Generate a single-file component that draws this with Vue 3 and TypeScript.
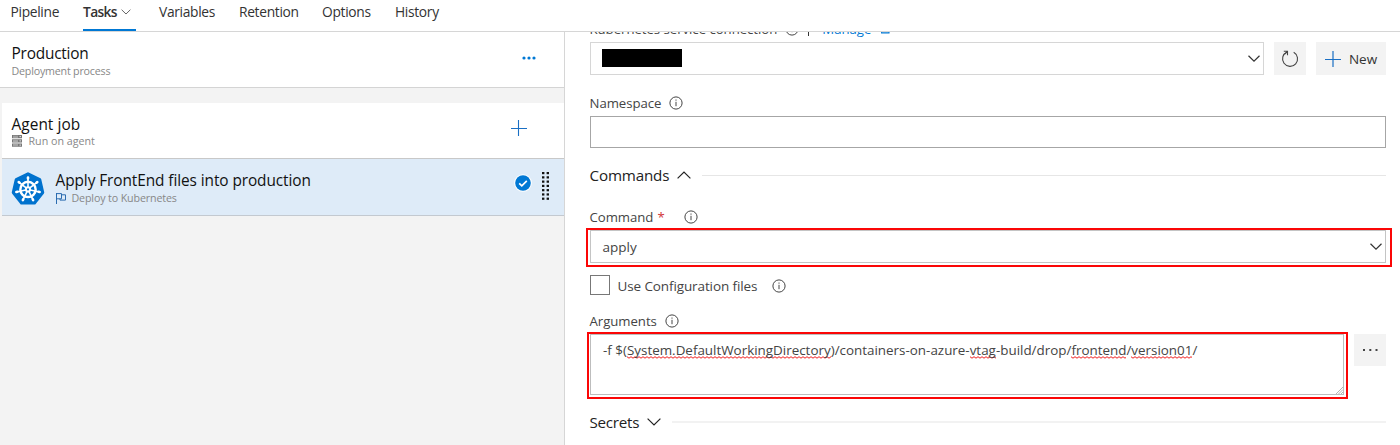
<script setup lang="ts">
import { h, type FunctionalComponent } from 'vue'

interface Tab {
  label: string
  active?: boolean
  id: string
}

const tabs: Tab[] = [
  { label: 'Pipeline', id: 'pipeline' },
  { label: 'Tasks', id: 'tasks', active: true },
  { label: 'Variables', id: 'variables' },
  { label: 'Retention', id: 'retention' },
  { label: 'Options', id: 'options' },
  { label: 'History', id: 'history' },
]

const InfoIcon: FunctionalComponent = () =>
  h('svg', { width: 14, height: 14, viewBox: '0 0 14 14', fill: 'none' }, [
    h('circle', { cx: 7, cy: 7, r: 6.1, stroke: '#444', 'stroke-width': 1 }),
    h('path', { d: 'M7 5.8v4.4M7 3.5v1.2', stroke: '#444', 'stroke-width': 1 }),
  ])

const spokes = [0, 1, 2, 3, 4, 5, 6].map((i) => (i * 360) / 7)
const gripRows = [0, 1, 2, 3, 4, 5, 6]
const argParts = [
  { text: '-f $(', bad: false },
  { text: 'System.DefaultWorkingDirectory', bad: true },
  { text: ')/containers-on-azure-', bad: false },
  { text: 'vtag', bad: true },
  { text: '-build/drop/', bad: false },
  { text: 'frontend', bad: true },
  { text: '/', bad: false },
  { text: 'version01', bad: true },
  { text: '/', bad: false },
]
</script>

<template>
  <div class="page">
    <nav class="tabs">
      <div v-for="tab in tabs" :key="tab.id" class="tab" :class="[tab.id, { active: tab.active }]">
        <span>{{ tab.label }}</span>
        <svg v-if="tab.active" width="10" height="6" viewBox="0 0 10 6" fill="none">
          <path d="M.6.7 5 5 9.4.7" stroke="#555" stroke-width=".9" />
        </svg>
      </div>
    </nav>

    <div class="body">
      <aside class="side">
        <div class="stage">
          <div class="lines">
            <div class="title">Production</div>
            <div class="sub t-dep">Deployment process</div>
          </div>
          <svg class="more" width="14" height="4" viewBox="0 0 14 4" fill="#0078d4">
            <circle cx="2" cy="2" r="1.6" /><circle cx="7" cy="2" r="1.6" /><circle cx="12" cy="2" r="1.6" />
          </svg>
        </div>

        <div class="job">
          <div class="lines">
            <div class="title t-agent">Agent job</div>
            <div class="sub t-run">
              <svg width="10" height="12" viewBox="0 0 10 12">
                <path d="M0 0h10v3.3H0zM0 4.2h10v3.3H0zM0 8.4h10v3.3H0z" fill="#777" />
                <path d="M1 1.2h5M1 2.3h5M1 5.4h5M1 6.5h5M1 9.6h5M1 10.7h5" stroke="#ddd" stroke-width=".5" />
                <path d="M7.6 1.6h1.2M7.6 5.9h1.2M7.6 10.1h1.2" stroke="#fff" stroke-width="1" />
              </svg>
              <span>Run on agent</span>
            </div>
          </div>
          <svg class="add" width="16" height="16" viewBox="0 0 16 16">
            <path d="M0 8.5h16M7.5 0v16" stroke="#1a6fc4" stroke-width="1.1" />
          </svg>
        </div>

        <div class="task">
          <svg class="kube" width="34" height="34" viewBox="0 0 32 32" fill="none">
            <path
              d="M16 1.6 27.2 7 30 19.4 22.2 29.4H9.8L2 19.4 4.8 7z"
              fill="#0072ce"
              stroke="#0072ce"
              stroke-width="2.6"
              stroke-linejoin="round"
            />
            <circle cx="16" cy="16.4" r="7.2" stroke="#fff" stroke-width="2.3" />
            <g v-for="a in spokes" :key="a" :transform="`rotate(${a} 16 16.4)`" stroke="#fff" stroke-linecap="round">
              <path d="M16 14.2V5.2" stroke-width="1.5" />
              <path d="M16 6.2V5.2" stroke-width="2.4" />
            </g>
            <circle cx="16" cy="16.4" r="2.9" fill="#fff" />
            <circle cx="16" cy="16.4" r="1" fill="#0072ce" />
          </svg>
          <div class="lines">
            <div class="title t-apply">Apply FrontEnd files into production</div>
            <div class="sub t-kube">
              <svg width="10" height="11" viewBox="0 0 10 11" fill="none">
                <path d="M.5 0v11M.5.6h5v5.2h-5M5.5 1.8h4v5.3H4V5.8" stroke="#2b6cb0" />
              </svg>
              <span>Deploy to Kubernetes</span>
            </div>
          </div>
          <svg class="check" width="18" height="18" viewBox="0 0 18 18">
            <circle cx="9" cy="9" r="8.8" fill="#fff" />
            <circle cx="9" cy="9" r="7.8" fill="#0078d4" />
            <path d="m5.2 9.3 2.6 2.5 5-5" fill="none" stroke="#fff" stroke-width="1.7" />
          </svg>
          <svg class="grip" width="7" height="28" viewBox="0 0 7 28" fill="#111">
            <template v-for="r in gripRows" :key="r">
              <rect x="0" :y="r * 4.27" width="2.4" height="2.2" />
              <rect x="4.6" :y="r * 4.27" width="2.4" height="2.2" />
            </template>
          </svg>
        </div>
      </aside>

      <main class="form">
        <div class="label first">
          <span class="t-ksc">Kubernetes service connection</span>
          <InfoIcon />
          <i class="bar"></i>
          <span class="link">Manage</span>
          <svg class="ext" width="9" height="10" viewBox="0 0 9 10" fill="none">
            <path d="M3 1H.6v7.9H8V6M5 .6h3.4V4M8.4.6 4 5" stroke="#0078d4" stroke-width="1.1" />
          </svg>
        </div>
        <div class="conn">
          <div class="select light">
            <div class="redacted"></div>
            <svg class="chev" width="12" height="7" viewBox="0 0 12 7" fill="none">
              <path d="M.5.7 6 6.1 11.5.7" stroke="#333" stroke-width="1.2" />
            </svg>
          </div>
          <button class="btn refresh" aria-label="Refresh">
            <svg width="18" height="18" viewBox="0 0 18 18" fill="none">
              <path d="M12.7 2.3A7.500 7.500 0 1 1 6 2" stroke="#444" stroke-width="1.1" />
              <path d="M2.8 1.300H6.500V5.200M6.500 1.300 3.500 4.300" stroke="#444" stroke-width="1.1" />
            </svg>
          </button>
          <button class="btn new">
            <svg width="16" height="16" viewBox="0 0 16 16">
              <path d="M0 8.5h16M8 0v16" stroke="#1a6fc4" stroke-width="1.2" />
            </svg>
            <span>New</span>
          </button>
        </div>

        <div class="label ns"><span class="t-ns">Namespace</span><InfoIcon /></div>
        <div class="input"></div>

        <div class="section commands">
          <span class="t-cmds">Commands</span>
          <svg width="14" height="8" viewBox="0 0 14 8" fill="none">
            <path d="M.6 7.4 7 1 13.4 7.4" stroke="#222" stroke-width="1.2" />
          </svg>
          <hr />
        </div>

        <div class="label cmd"><span class="t-cmd">Command</span><em>*</em><InfoIcon /></div>
        <div class="marked">
          <div class="select">
            <span class="t-applyv">apply</span>
            <svg class="chev" width="12" height="7" viewBox="0 0 12 7" fill="none">
              <path d="M.5.7 6 6.1 11.5.7" stroke="#333" stroke-width="1.2" />
            </svg>
          </div>
          <div class="mark mark-cmd"></div>
        </div>

        <div class="config">
          <div class="box"></div>
          <span class="t-cfg">Use Configuration files</span>
          <InfoIcon />
        </div>

        <div class="label args"><span class="t-args">Arguments</span><InfoIcon /></div>
        <div class="argrow">
          <div class="marked grow">
            <div class="area">
              <span v-for="(p, i) in argParts" :key="i" :class="{ bad: p.bad }">{{ p.text }}</span>
              <svg class="resize" width="7" height="7" viewBox="0 0 7 7">
                <path d="M0 7 7 0M2.5 7 7 2.5M5 7 7 5" stroke="#aaa" stroke-width=".9" />
              </svg>
            </div>
            <div class="mark mark-args"></div>
          </div>
          <button class="btn dots" aria-label="More">
            <svg width="15" height="2" viewBox="0 0 15 2" fill="#444">
              <rect x="0" width="2" height="2" /><rect x="6.3" width="2" height="2" /><rect x="12.5" width="2" height="2" />
            </svg>
          </button>
        </div>

        <div class="section secrets">
          <span class="t-sec">Secrets</span>
          <svg width="14" height="8" viewBox="0 0 14 8" fill="none">
            <path d="M.6.6 7 7 13.4.6" stroke="#222" stroke-width="1.2" />
          </svg>
          <hr />
        </div>
      </main>
    </div>
  </div>
</template>

<style>
body {
  background: #fff;
}
</style>

<style scoped>
* {
  box-sizing: border-box;
}
.page {
  width: 1400px;
  height: 445px;
  overflow: hidden;
  display: flex;
  flex-direction: column;
  font-family: 'Open Sans', 'Noto Sans', sans-serif;
  font-size: 13.5px;
  color: #444;
  white-space: nowrap;
}
svg {
  flex: none;
  display: block;
}
.tabs {
  height: 32px;
  flex: none;
  border-bottom: 1px solid #d6d6d6;
  padding-left: 10.5px;
  display: flex;
}
.tab {
  height: 31px;
  line-height: 23px;
  font-size: 13.8px;
  color: #333;
  display: flex;
  letter-spacing: -0.32px;
}
.tab.pipeline { width: 72.5px; }
.tab.tasks {
  width: 53px;
  margin-right: 23px;
  font-weight: 600;
  border-bottom: 2px solid #0078d4;
  gap: 4px;
  letter-spacing: -0.65px;
}
.tab.tasks svg { margin-top: 9px; }
.tab.variables { width: 80px; }
.tab.retention { width: 83px; }
.tab.options { width: 73px; }
.body {
  flex: 1;
  display: flex;
  min-height: 0;
}
.side {
  width: 565px;
  flex: none;
  background: #f3f3f3;
  border-right: 1px solid #d6d6d6;
}
.stage {
  height: 56px;
  background: #fff;
  border-bottom: 1px solid #d4d4d4;
  padding: 12px 28px 0 11.5px;
  display: flex;
  justify-content: space-between;
}
.more { margin-top: 12px; }
.title {
  font-size: 15.4px;
  line-height: 20px;
  color: #111;
  letter-spacing: -0.2px;
}
.t-agent { letter-spacing: 0.05px; }
.t-apply { letter-spacing: -0.08px; }
.sub {
  font-size: 10.7px;
  line-height: 16px;
  color: #888;
  display: flex;
  align-items: center;
  margin-top: -1px;
}
.t-dep { letter-spacing: -0.2px; }
.t-kube { letter-spacing: -0.14px; }
.job {
  margin: 15px 0 0 2px;
  height: 56px;
  background: #fff;
  border-bottom: 1px solid #c8c8c8;
  padding: 12px 37px 0 9.5px;
  display: flex;
  justify-content: space-between;
}
.job .sub {
  gap: 7px;
  margin-top: -2px;
}
.add { margin-top: 5px; }
.task {
  margin-left: 2px;
  height: 57px;
  background: #deebf8;
  border-bottom: 1px solid #c3c9d0;
  padding: 11px 15px 0 8.5px;
  display: flex;
}
.kube { margin-top: 2px; }
.task .lines { margin: 1px 0 0 11px; }
.task .sub { gap: 6px; }
.check { margin: 4px 10px 0 auto; }
.grip { margin-top: 2px; }

.form {
  flex: 1;
  padding: 0 14px 0 25px;
  overflow: hidden;
  display: flex;
  flex-direction: column;
}
.label {
  flex: none;
  height: 20px;
  line-height: 20px;
  font-size: 13.2px;
  letter-spacing: -0.04px;
  margin-left: -0.5px;
  display: flex;
  align-items: center;
  gap: 8px;
}
.first { margin: -13px 0 3px -0.5px; }
.t-ksc { letter-spacing: -0.03px; }
.bar {
  width: 1px;
  height: 14px;
  margin: 0 5px 0 1px;
  background: #333;
}
.link { color: #0078d4; }
.ext { margin-left: 2px; }
.conn {
  display: flex;
  height: 33px;
  flex: none;
  gap: 10px;
}
.select {
  height: 33px;
  border: 1px solid #c4c4c4;
  display: flex;
  align-items: center;
  justify-content: space-between;
  padding: 0 3px 0 12px;
}
.t-applyv { margin-left: -0.5px; }
.select.light {
  flex: 1;
  border-color: #d6d6d6;
}
.redacted {
  width: 80px;
  height: 18px;
  margin: -2px 0 0 -1px;
  background: #000;
}
.btn {
  border: 0;
  padding: 0;
  background: #f3f3f3;
  font: inherit;
  color: #333;
  display: flex;
  align-items: center;
  justify-content: center;
  flex: none;
}
.refresh { width: 32px; }
.new {
  width: 70px;
  gap: 8px;
}
.ns { margin: 18px 0 3px -0.5px; }
.input {
  height: 32px;
  flex: none;
  border: 1px solid #a6a6a6;
}
.section {
  height: 24px;
  flex: none;
  display: flex;
  align-items: center;
  font-size: 15.2px;
  letter-spacing: -0.16px;
  color: #222;
  gap: 8px;
  margin-left: -0.5px;
}
.section hr {
  flex: 1;
  margin: 0 0 0 3px;
  border: 0;
  height: 1px;
  background: #e6e6e6;
}
.section.secrets hr {
  height: 2px;
  background: #f2f2f2;
}
.commands { margin-top: 15px; }
.cmd { margin: 20px 0 3px -0.5px; }
.cmd em {
  font-style: normal;
  color: #d13438;
  margin: 0 11px 0 -4px;
}
.marked {
  position: relative;
  flex: none;
}
.mark {
  position: absolute;
  border: 2px solid #fb0606;
}
.mark-cmd {
  inset: -2px -6px -4px -4px;
}
.mark-args {
  inset: -2px -4px -4px -3px;
}
.config {
  flex: none;
  margin-top: 12px;
  height: 21px;
  display: flex;
  align-items: center;
  letter-spacing: -0.11px;
}
.box {
  width: 20px;
  height: 20px;
  border: 1px solid #777;
  margin: -1px 7.5px 0 0;
}
.config svg { margin-left: 15px; }
.args { margin: 15px 0 3px -0.5px; }
.argrow {
  display: flex;
  flex: none;
  gap: 10px;
}
.grow { flex: 1; }
.area {
  height: 61px;
  border: 1px solid #bdbdbd;
  padding: 5px 0 0 12px;
  line-height: 20px;
  font-size: 13.42px;
  display: flex;
}
.bad {
  height: 19px;
  background: url("data:image/svg+xml,%3Csvg xmlns='http://www.w3.org/2000/svg' width='4' height='3'%3E%3Cpath d='M0 .7 2 2.2 4 .7' fill='none' stroke='%23f02020'/%3E%3C/svg%3E") repeat-x left bottom;
}
.resize {
  position: absolute;
  right: 1px;
  bottom: 1px;
}
.dots {
  width: 32px;
  height: 32px;
}
.secrets {
  margin-top: 15px;
  letter-spacing: -0.26px;
}
</style>
